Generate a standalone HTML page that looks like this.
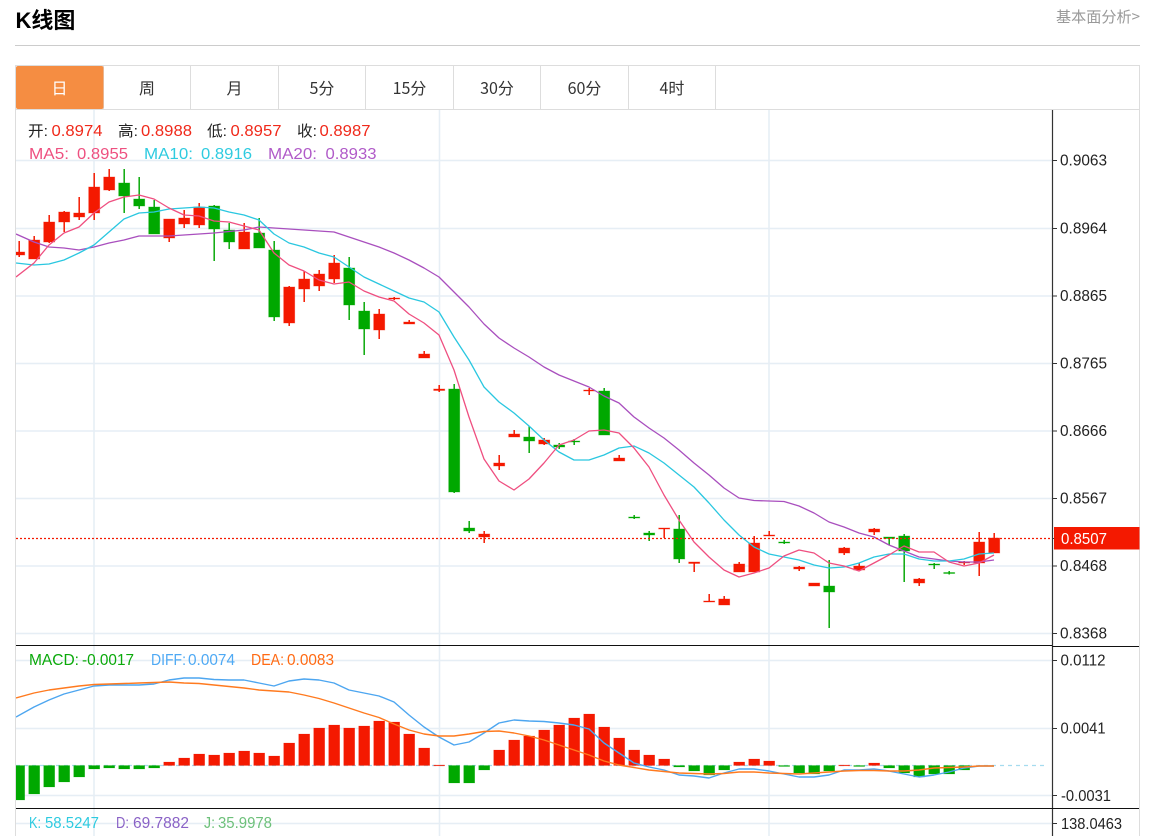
<!DOCTYPE html>
<html lang="zh"><head><meta charset="utf-8"><title>K线图</title>
<style>
html,body{margin:0;padding:0;background:#fff;width:1158px;height:836px;overflow:hidden}
svg{display:block;font-family:"Liberation Sans","Noto Sans CJK SC",sans-serif}
.ax{font-size:15.4px;fill:#222}
.l{font-size:16px}
.t{font-size:16px;fill:#333;text-anchor:middle;font-family:"Noto Sans CJK SC","Liberation Sans",sans-serif}
.m{font-size:15.4px}
</style></head><body>
<svg width="1158" height="836" viewBox="0 0 1158 836" xmlns="http://www.w3.org/2000/svg">
<defs><clipPath id="c"><rect x="16" y="110" width="1036" height="726"/></clipPath></defs>
<text x="15.5" y="28" font-size="22" font-weight="700" fill="#000" font-family="'Liberation Sans','Noto Sans CJK SC',sans-serif">K线图</text>
<text x="1056" y="22" font-size="15" fill="#999" font-family="'Noto Sans CJK SC',sans-serif" textLength="84" lengthAdjust="spacingAndGlyphs">基本面分析&gt;</text>
<rect x="15" y="45" width="1125" height="1" fill="#ccc"/>

<!-- frame -->
<path d="M15.5 836V65.5H1139.5V836" fill="none" stroke="#ddd"/>
<path d="M16 109.5H1139" stroke="#ddd" fill="none"/>
<path d="M103.5 66V109M190.5 66V109M278.5 66V109M365.5 66V109M453.5 66V109M540.5 66V109M628.5 66V109M715.5 66V109" stroke="#ddd"/>
<rect x="16" y="66" width="87.5" height="43" rx="2" fill="#f58d42"/>
<text class="t" x="59.5" y="94" style="fill:#fff">日</text>
<text class="t" x="147" y="94">周</text>
<text class="t" x="234.5" y="94">月</text>
<text class="t" x="322" y="94">5分</text>
<text class="t" x="409.5" y="94">15分</text>
<text class="t" x="497" y="94">30分</text>
<text class="t" x="584.5" y="94">60分</text>
<text class="t" x="672" y="94">4时</text>

<!-- grid -->
<g stroke="#e6eef5" fill="none">
<path d="M94 110V836M439.5 110V836M769 110V836" stroke-width="1.6"/>
<path d="M16 160.5H1052M16 228.5H1052M16 296H1052M16 363.5H1052M16 431H1052M16 498.5H1052M16 566H1052M16 633.5H1052M16 660.5H1052M16 728.5H1052M16 795.5H1052M16 823.5H1052" stroke-width="1.4"/>
</g>

<!-- axis -->
<path d="M1052.5 110V836" stroke="#333" stroke-width="1.2"/>
<path d="M16 645.5H1052M16 808.5H1139M1052 646.5H1139" stroke="#111" stroke-width="1.1"/>
<path d="M1052 160.5h5M1052 228.5h5M1052 296h5M1052 363.5h5M1052 431h5M1052 498.5h5M1052 538.5h5M1052 566h5M1052 633.5h5M1052 660.5h5M1052 728.5h5M1052 795.5h5M1052 823.5h5" stroke="#333"/>
<rect x="1054" y="527" width="85.5" height="22.5" fill="#f41900"/>
<g class="ax">
<text class="ax" x="1060" y="165.5" textLength="47" lengthAdjust="spacingAndGlyphs">0.9063</text>
<text class="ax" x="1060" y="233.5" textLength="47" lengthAdjust="spacingAndGlyphs">0.8964</text>
<text class="ax" x="1060" y="301" textLength="47" lengthAdjust="spacingAndGlyphs">0.8865</text>
<text class="ax" x="1060" y="368.5" textLength="47" lengthAdjust="spacingAndGlyphs">0.8765</text>
<text class="ax" x="1060" y="436" textLength="47" lengthAdjust="spacingAndGlyphs">0.8666</text>
<text class="ax" x="1060" y="503.5" textLength="47" lengthAdjust="spacingAndGlyphs">0.8567</text>
<text class="ax" x="1061" y="544" textLength="46" lengthAdjust="spacingAndGlyphs" style="fill:#fff">0.8507</text>
<text class="ax" x="1060" y="571" textLength="47" lengthAdjust="spacingAndGlyphs">0.8468</text>
<text class="ax" x="1060" y="638.5" textLength="47" lengthAdjust="spacingAndGlyphs">0.8368</text>
<text class="ax" x="1060.5" y="665.5" textLength="45" lengthAdjust="spacingAndGlyphs">0.0112</text>
<text class="ax" x="1060.5" y="733.5" textLength="45" lengthAdjust="spacingAndGlyphs">0.0041</text>
<text class="ax" x="1061" y="801" textLength="50" lengthAdjust="spacingAndGlyphs">-0.0031</text>
<text class="ax" x="1061" y="829" textLength="61" lengthAdjust="spacingAndGlyphs">138.0463</text>
</g>

<g clip-path="url(#c)">
<!-- candles -->
<g transform="translate(-0.3 0)">
<path fill="none" stroke="#f41900" stroke-width="1.5" d="M19.5 241V257M34.5 236V259M49.5 215V243M64.5 211V232M79.5 197V220M94.5 173V220M109.5 169V191M169.5 219V242M184.5 210V228M199.5 203V228M244.5 223V249M289.5 286V326M304.5 271V302M319.5 270V291M334.5 255V283M379.5 309V339M394.5 297V300M409.5 320V324M424.5 351V358M439.5 385V392M484.5 531V543M499.5 455V470M514.5 430V437M544.5 438V445M589.5 388V395M619.5 455V461M664.5 528V538M694.5 562V572M709.5 594V602M724.5 596V605M739.5 562V572M754.5 536V572M769.5 531V536M799.5 566V571M844.5 547V555M859.5 563V570M874.5 528V535M919.5 578V586M964.5 561V565M979.5 532V576M994.5 533V553"/>
<path fill="none" stroke="#0aa90a" stroke-width="1.5" d="M124.5 169V213M139.5 177V209M154.5 200V234M214.5 205V261M229.5 223V249M259.5 218V248M274.5 241V321M349.5 257V320M364.5 302V355M454.5 384V493M469.5 521V533M529.5 426V453M559.5 443V449M574.5 439V445M604.5 388V435M634.5 515V519M649.5 531V541M679.5 515V563M784.5 540V544M829.5 560V628M889.5 537V545M904.5 534V582M934.5 563V569M949.5 571V574.5"/>
<path fill="#f41900" stroke="#f41900" stroke-opacity=".45" stroke-width=".8" d="M14 252h11v3h-11zM29 240h11v19h-11zM44 222h11v20h-11zM59 212h11v10h-11zM74 213h11v4h-11zM89 187h11v26h-11zM104 177h11v13h-11zM164 219h11v19h-11zM179 218h11v6h-11zM194 207h11v18h-11zM239 232h11v17h-11zM284 287h11v36h-11zM299 279h11v10h-11zM314 274h11v12h-11zM329 263h11v16h-11zM374 314h11v16h-11zM389 298h11v1h-11zM404 322h11v2h-11zM419 354h11v4h-11zM434 389h11v1.5h-11zM479 534h11v3h-11zM494 463h11v3h-11zM509 434h11v3h-11zM539 440h11v4h-11zM584 390h11v1h-11zM614 458h11v3h-11zM659 528h11v1h-11zM689 562h11v1.5h-11zM704 601h11v1h-11zM719 599h11v6h-11zM734 564h11v8h-11zM749 543h11v29h-11zM764 535h11v1h-11zM794 567h11v2h-11zM809 583h11v3h-11zM839 548h11v5h-11zM854 566h11v4h-11zM869 529h11v3h-11zM914 579h11v4h-11zM959 562h11v1h-11zM974 542h11v21h-11zM989 538h11v15h-11z"/>
<path fill="#00a800" stroke="#00a800" stroke-opacity=".45" stroke-width=".8" d="M119 183h11v13h-11zM134 199h11v7h-11zM149 207h11v27h-11zM209 206h11v23h-11zM224 230h11v12h-11zM254 233h11v15h-11zM269 250h11v67h-11zM344 268h11v37h-11zM359 311h11v18h-11zM449 389h11v103h-11zM464 528h11v3h-11zM524 437h11v4h-11zM554 445h11v2h-11zM569 441h11v1h-11zM599 391h11v44h-11zM629 517h11v1h-11zM644 533h11v2h-11zM674 529h11v30h-11zM779 542h11v1h-11zM824 586h11v6h-11zM884 537h11v1.5h-11zM899 536h11v15h-11zM929 564h11v1h-11zM944 572.5h11v1h-11z"/>
</g>
<!-- MA -->
<g fill="none" stroke-width="1.3" stroke-linejoin="round">
<polyline stroke="#a94fbe" points="16,234 34,242 49,247 64,248 79,250 94,247 109,243 124,240 139,236 154,236 169,236 184,235 199,234 214,233 229,231.5 244,230 259,227 274,228 289,229 304,230 319,231 334,232 349,237 364,242 379,247 394,253 409,260 424,268 439,277 454,292 469,307 484,324 499,338 514,348 529,357 544,367 559,375 574,381 589,387 604,396 619,403 634,417 649,428 664,438 679,450 694,463 709,475 724,488 739,498 754,500.5 769,501 784,501.5 799,506 814,513 829,522 844,527 859,533 874,537 889,545 904,551 919,557 934,559 949,561 964,562 979,562 994,560"/>
<polyline stroke="#2ac7e0" points="16,263 34,265 49,264 64,260 79,253 94,245 109,232 124,219 139,213 154,212 169,209 184,208 199,207 214,208 229,212 244,215 259,220 274,234 289,243 304,247 319,253 334,257 349,267 364,277 379,284 394,291 409,298 424,302 439,312 454,337 469,360 484,387 499,402 514,413 529,426 544,440 559,452 574,460 589,460 604,455 619,448 634,446 649,453 664,463 679,475 694,487 709,503 724,520 739,535 754,547 769,554 784,557 799,560 814,565 829,568 844,567 859,563 874,557 889,554 904,554 919,559 934,561 949,561 964,559 979,554 994,553"/>
<polyline stroke="#ef4f80" points="16,277 34,263 49,245 64,233 79,227 94,213 109,202 124,197 139,195 154,199 169,208 184,215 199,216 214,221 229,222 244,226 259,230 274,253 289,265 304,271 319,280 334,284 349,282 364,291 379,297 394,301 409,314 424,323 439,335 454,370 469,417 484,459 499,481 514,490 529,479 544,463 559,445 574,440 589,431 604,430 619,433 634,448 649,467 664,495 679,520 694,542 709,557 724,570 739,577 754,573 769,568 784,556 799,550 814,553 829,563 844,566 859,571 874,563 889,555 904,546 919,552 934,552 949,562 964,566 979,563 994,555"/>
</g>
<!-- price line -->
<path d="M16 538.5H1052" stroke="#f41900" stroke-width="1.3" stroke-dasharray="2 2"/>

<!-- MACD -->
<path d="M16 765.5H1048" stroke="#a5dcef" stroke-width="1.2" stroke-dasharray="4 4"/>
<g transform="translate(-0.3 0)">
<path fill="#f41900" stroke="#f41900" stroke-opacity=".35" stroke-width=".6" d="M164 762h11v3.5h-11zM179 758h11v7.5h-11zM194 754h11v11.5h-11zM209 755h11v10.5h-11zM224 753h11v12.5h-11zM239 751h11v14.5h-11zM254 753h11v12.5h-11zM269 756h11v9.5h-11zM284 743h11v22.5h-11zM299 734h11v31.5h-11zM314 728h11v37.5h-11zM329 725h11v40.5h-11zM344 728h11v37.5h-11zM359 726h11v39.5h-11zM374 721h11v44.5h-11zM389 722h11v43.5h-11zM404 734h11v31.5h-11zM419 748h11v17.5h-11zM434 765h11v.8h-11zM494 750h11v15.5h-11zM509 740h11v25.5h-11zM524 736h11v29.5h-11zM539 730h11v35.5h-11zM554 725h11v40.5h-11zM569 718h11v47.5h-11zM584 714h11v51.5h-11zM599 727h11v38.5h-11zM614 738h11v27.5h-11zM629 750h11v15.5h-11zM644 755h11v10.5h-11zM659 759h11v6.5h-11zM734 762h11v3.5h-11zM749 759h11v6.5h-11zM764 761h11v4.5h-11zM839 765h11v.8h-11zM869 763h11v2.5h-11z"/>
<path fill="#00a800" stroke="#00a800" stroke-opacity=".35" stroke-width=".6" d="M14 765.5h11v34.5h-11zM29 765.5h11v28.5h-11zM44 765.5h11v21.5h-11zM59 765.5h11v16.5h-11zM74 765.5h11v11.5h-11zM89 765.5h11v3.5h-11zM104 765.5h11v2.5h-11zM119 765.5h11v3.5h-11zM134 765.5h11v3.5h-11zM149 765.5h11v2.5h-11zM449 765.5h11v17.5h-11zM464 765.5h11v17.5h-11zM479 765.5h11v4.5h-11zM674 765.5h11v1.5h-11zM689 765.5h11v5.5h-11zM704 765.5h11v9.5h-11zM719 765.5h11v4.5h-11zM779 765.5h11v1h-11zM794 765.5h11v7.5h-11zM809 765.5h11v8.5h-11zM824 765.5h11v5.5h-11zM854 765.5h11v1h-11zM884 765.5h11v2.5h-11zM899 765.5h11v7.5h-11zM914 765.5h11v11.5h-11zM929 765.5h11v8.5h-11zM944 765.5h11v8.5h-11zM959 765.5h11v4.5h-11z"/>
</g>
<g fill="none" stroke-width="1.4" stroke-linejoin="round">
<polyline stroke="#4da6f0" points="16,717 34,707 49,700 64,694 79,690 94,686 109,685 124,685 139,685 154,684 169,680 184,678 199,678 214,679.5 229,680 244,680 259,683 274,686 289,681 304,679 319,680 334,683 349,690 364,693 379,696 394,702 409,715 424,727 439,737 454,745 469,742 484,733 499,723 514,720 529,721 544,721.5 559,723 574,725 589,729 604,743 619,753 634,763 649,767 664,770 679,775 694,776 709,778 724,773 739,769 754,769 769,771 784,774 799,777 814,777 829,775 844,770 859,770 874,769 889,771 904,774 919,777 934,775 949,772 964,768 979,766 994,766"/>
<polyline stroke="#ff7a1f" points="16,698 34,693 49,690 64,688 79,686 94,684.5 109,684 124,683.5 139,683 154,682.5 169,682 184,683 199,683.5 214,685 229,686.5 244,688 259,690 274,691 289,692 304,695 319,698.5 334,703 349,708 364,713 379,717.5 394,724 409,730 424,734 439,736 454,736 469,734 484,731.5 499,731 514,733 529,736 544,740 559,745 574,750 589,755 604,761 619,765 634,767.5 649,770 664,771.5 679,773 694,773.5 709,774 724,773.5 739,772 754,772 769,773 784,773.5 799,774 814,773 829,772 844,771 859,770.5 874,770.5 889,771 904,771 919,770 934,768 949,767.5 964,767 979,766 994,766"/>
</g>
</g>

<!-- legends -->
<g class="l" font-size="16">
<g fill="#222">
<text x="28" y="136" textLength="20" font-family="'Liberation Sans','Noto Sans CJK SC',sans-serif" font-size="15" lengthAdjust="spacingAndGlyphs">开:</text>
<text x="118" y="136" textLength="20" font-size="15" lengthAdjust="spacingAndGlyphs">高:</text>
<text x="207" y="136" textLength="20" font-size="15" lengthAdjust="spacingAndGlyphs">低:</text>
<text x="297" y="136" textLength="20" font-size="15" lengthAdjust="spacingAndGlyphs">收:</text>
</g>
<g fill="#f0291a">
<text x="51.5" y="136" textLength="51" lengthAdjust="spacingAndGlyphs">0.8974</text>
<text x="141" y="136" textLength="51" lengthAdjust="spacingAndGlyphs">0.8988</text>
<text x="230.5" y="136" textLength="51" lengthAdjust="spacingAndGlyphs">0.8957</text>
<text x="319.5" y="136" textLength="51" lengthAdjust="spacingAndGlyphs">0.8987</text>
</g>
<text x="29" y="159" fill="#ee5080" textLength="40" lengthAdjust="spacingAndGlyphs">MA5:</text>
<text x="77" y="159" fill="#ee5080" textLength="51" lengthAdjust="spacingAndGlyphs">0.8955</text>
<text x="144" y="159" fill="#2ecbe0" textLength="49" lengthAdjust="spacingAndGlyphs">MA10:</text>
<text x="201" y="159" fill="#2ecbe0" textLength="51" lengthAdjust="spacingAndGlyphs">0.8916</text>
<text x="268" y="159" fill="#b05ac8" textLength="49" lengthAdjust="spacingAndGlyphs">MA20:</text>
<text x="325.5" y="159" fill="#b05ac8" textLength="51" lengthAdjust="spacingAndGlyphs">0.8933</text>
</g>
<g class="m" font-size="15.4">
<text x="29" y="665" fill="#0aa90a" textLength="50" lengthAdjust="spacingAndGlyphs">MACD:</text>
<text x="82" y="665" fill="#0aa90a" textLength="52" lengthAdjust="spacingAndGlyphs">-0.0017</text>
<text x="151" y="665" fill="#4ea9f4" textLength="35" lengthAdjust="spacingAndGlyphs">DIFF:</text>
<text x="188" y="665" fill="#4ea9f4" textLength="47" lengthAdjust="spacingAndGlyphs">0.0074</text>
<text x="251" y="665" fill="#ff6a13" textLength="33" lengthAdjust="spacingAndGlyphs">DEA:</text>
<text x="287" y="665" fill="#ff6a13" textLength="47" lengthAdjust="spacingAndGlyphs">0.0083</text>
<text x="29" y="828" fill="#2ecbe0" textLength="12" lengthAdjust="spacingAndGlyphs">K:</text>
<text x="45" y="828" fill="#2ecbe0" textLength="54" lengthAdjust="spacingAndGlyphs">58.5247</text>
<text x="116" y="828" fill="#8a62c6" textLength="13" lengthAdjust="spacingAndGlyphs">D:</text>
<text x="133" y="828" fill="#8a62c6" textLength="56" lengthAdjust="spacingAndGlyphs">69.7882</text>
<text x="204" y="828" fill="#6dc07a" textLength="11" lengthAdjust="spacingAndGlyphs">J:</text>
<text x="218" y="828" fill="#6dc07a" textLength="54" lengthAdjust="spacingAndGlyphs">35.9978</text>
</g>
</svg>
</body></html>
